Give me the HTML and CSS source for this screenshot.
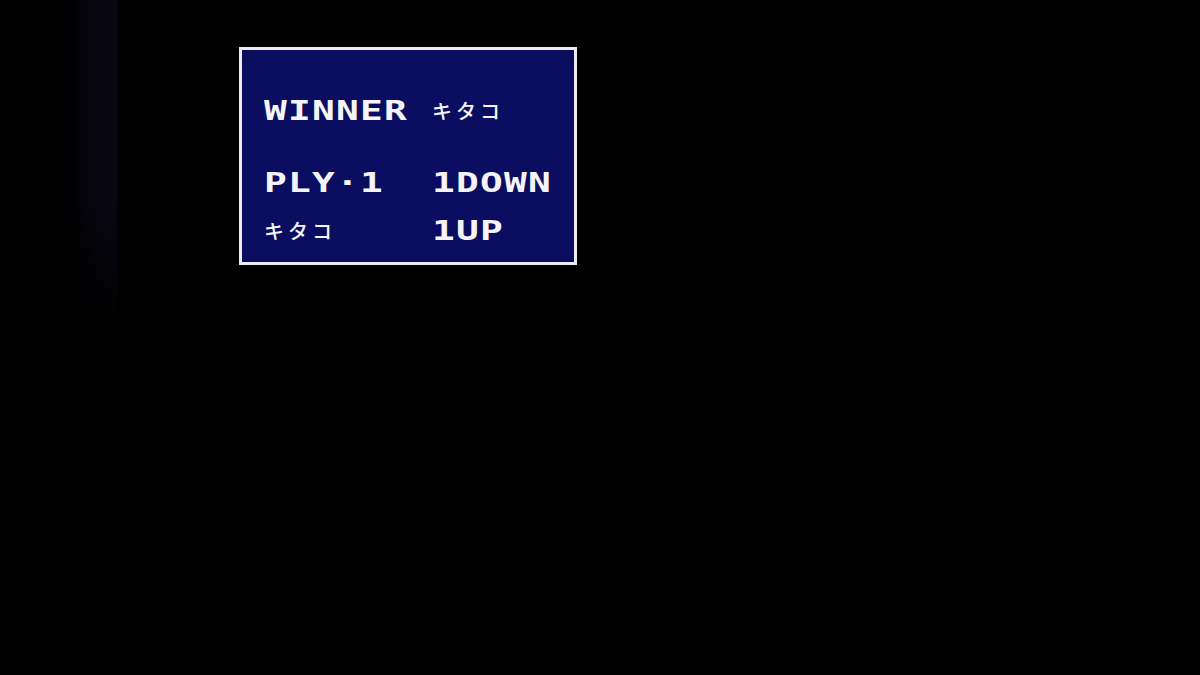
FILE: index.html
```html
<!DOCTYPE html>
<html lang="ja">
<head>
<meta charset="utf-8">
<title>WINNER</title>
<link rel="stylesheet" href="styles.css">
</head>
<body>
<div class="screen">
  <div class="panel">
    <div class="row row-winner">
      <span class="latin">WINNER</span>
      <span class="kana">キタコ</span>
    </div>
    <div class="row row-ply">
      <span class="latin">PLY·1</span>
      <span class="latin">1DOWN</span>
    </div>
    <div class="row row-kitako">
      <span class="kana">キタコ</span>
      <span class="latin">1UP</span>
    </div>
  </div>
</div>
</body>
</html>
```

FILE: styles.css
```css
html, body {
  margin: 0;
  padding: 0;
  width: 1200px;
  height: 675px;
  overflow: hidden;
}

body {
  background-color: #000;
  background-image:
    linear-gradient(to bottom, rgba(0,0,0,0) 0px, rgba(0,0,0,0) 200px, #000 335px),
    linear-gradient(to right, #000 0px, #000 64px, #030308 80px, #06060f 100px, #080714 116px, #000 119px);
  font-family: "DejaVu Sans Mono", monospace;
}

.screen {
  padding: 47px 0 0 239px;
}

.panel {
  width: 332px;
  height: 212px;
  border: 3px solid #ececf4;
  background: #0b0e60;
  padding: 0;
  display: flex;
  flex-direction: column;
}

.row {
  display: grid;
  grid-template-columns: 168px 1fr;
  padding-left: 22px;
  height: 24px;
  align-items: center;
  color: #f4f4f8;
}

.row-winner { margin-top: 49px; }
.row-ply { margin-top: 48px; }
.row-kitako { margin-top: 24px; }

.latin {
  display: inline-block;
  font-family: "DejaVu Sans Mono", monospace;
  font-weight: 700;
  font-size: 27px;
  line-height: 24px;
  letter-spacing: 0.89px;
  transform: scaleX(1.4);
  transform-origin: left center;
  white-space: pre;
}

.kana {
  display: inline-block;
  font-family: "Noto Sans CJK JP", sans-serif;
  font-weight: 500;
  font-size: 20px;
  line-height: 24px;
  letter-spacing: 4px;
  white-space: pre;
}
```
